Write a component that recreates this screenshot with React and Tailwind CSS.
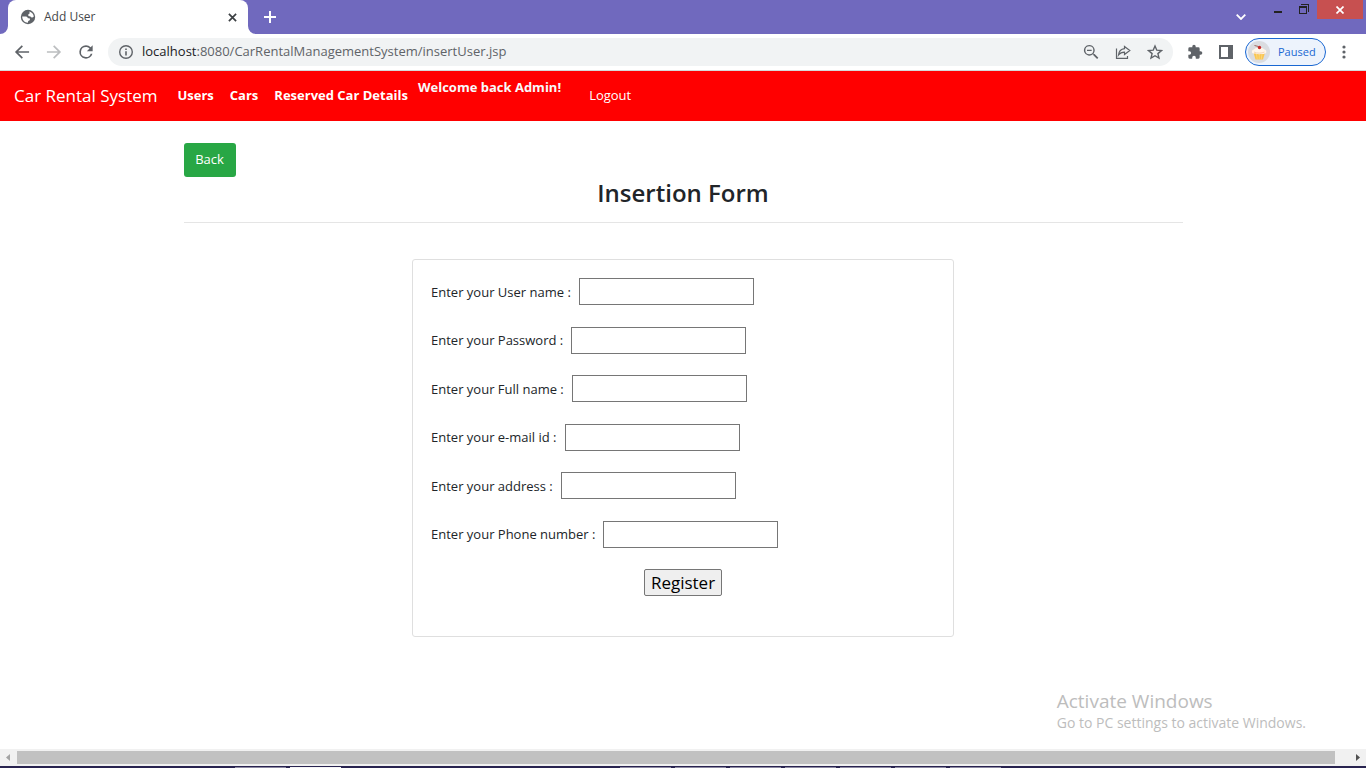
import React from "react";

const fields = [
  { id: "username", label: "Enter your User name :", type: "text" },
  { id: "password", label: "Enter your Password :", type: "password" },
  { id: "fullname", label: "Enter your Full name :", type: "text" },
  { id: "email", label: "Enter your e-mail id :", type: "email" },
  { id: "address", label: "Enter your address :", type: "text" },
  { id: "phone", label: "Enter your Phone number :", type: "tel" },
];

const taskbarWindows = [1, 2, 3, 4, 5, 6, 7];

function Icon({ size = "size-5", color = "fill-[#5f6368]", children, box = "0 0 24 24" }) {
  return (
    <svg viewBox={box} className={`${size} ${color} shrink-0`} aria-hidden="true">
      {children}
    </svg>
  );
}

function TabStrip() {
  return (
    <div className="flex h-[34px] shrink-0 items-start bg-[#7069be]">
      <svg viewBox="0 0 8 8" className="size-2 shrink-0 self-end fill-white" aria-hidden="true">
        <path d="M8 0v8H0a8 8 0 0 0 8-8Z" />
      </svg>
      <div className="flex h-full w-60 items-center rounded-t-lg bg-white pr-2 pl-3">
        <svg viewBox="0 0 16 16" className="size-4 shrink-0" aria-hidden="true">
          <circle cx="8" cy="8" r="7.200" fill="#5f6368" />
          <path
            d="M9.300 2.600c2.400.5 4.200 2.500 4.500 5-.7.9-1.700 1.100-2.600.7-.5-.8-1.300-1-2.300-1-.8-.5-.9-1.500-.2-2.200.8-.2 1.300-.6.6-2.500z"
            fill="#fff"
          />
          <path
            d="M2.200 7.600h3c1.500 0 2.500.6 2.700 1.700h1.500c.8.500.8 1.700-.1 2.200-.9.200-1.300.7-1.400 2.300-3.200 0-5.700-2.700-5.700-6.200z"
            fill="#fff"
          />
        </svg>
        <span className="ml-2 flex-1 text-xs text-[#45474a]">Add User</span>
        <button type="button" aria-label="Close tab" className="flex size-4 items-center justify-center">
          <svg viewBox="0 0 10 10" className="size-[9px] stroke-[#3c4043]" strokeWidth="1.900" aria-hidden="true">
            <path d="M1 1l8 8M9 1L1 9" />
          </svg>
        </button>
      </div>
      <svg viewBox="0 0 8 8" className="size-2 shrink-0 self-end fill-white" aria-hidden="true">
        <path d="M0 0v8h8a8 8 0 0 1-8-8Z" />
      </svg>
      <button type="button" aria-label="New tab" className="flex h-full w-7 items-center justify-center">
        <svg viewBox="0 0 12 12" className="size-3 stroke-white" strokeWidth="2" aria-hidden="true">
          <path d="M6 0v12M0 6h12" />
        </svg>
      </button>
      <div className="flex-1" />
      <button type="button" aria-label="Search tabs" className="flex h-full w-8 items-center justify-center">
        <svg viewBox="0 0 10 6" className="h-[6px] w-[10px] fill-none stroke-white" strokeWidth="1.800" aria-hidden="true">
          <path d="M.7.7L5 5 9.300.7" />
        </svg>
      </button>
      <button type="button" aria-label="Minimize" className="ml-2 flex h-[18px] w-[26px] items-center justify-center">
        <svg viewBox="0 0 8 16" className="h-4 w-2 fill-[#222]" aria-hidden="true">
          <path d="M0 10h8v2H0z" />
        </svg>
      </button>
      <button type="button" aria-label="Restore" className="flex h-[18px] w-[26px] items-center justify-center">
        <svg viewBox="0 0 10 10" className="size-[10px] fill-[#222]" aria-hidden="true">
          <path fillRule="evenodd" d="M2 0h8v8H9V1H2zM0 2h8v8H0zM1 4v5h6V4z" />
        </svg>
      </button>
      <button
        type="button"
        aria-label="Close window"
        className="mr-[3px] flex h-[19px] w-[46px] items-center justify-center bg-[#c75050]"
      >
        <svg viewBox="0 0 8 8" className="size-2 stroke-white" strokeWidth="1.700" aria-hidden="true">
          <path d="M.5.500l7 7M7.500.500l-7 7" />
        </svg>
      </button>
    </div>
  );
}

function Toolbar() {
  return (
    <div className="flex h-[37px] shrink-0 items-center border-b border-[#d5dad8] bg-white pr-3.5 pl-3">
      <button type="button" aria-label="Go back">
        <Icon>
          <path d="M20.500 11H7.400l5.700-5.700L11.700 3.900 3.500 12l8.200 8.100 1.400-1.400L7.400 13h13.100z" />
        </Icon>
      </button>
      <button type="button" aria-label="Go forward" className="ml-3">
        <Icon color="fill-[#bcbec0]">
          <path d="M3.500 11h13.100l-5.700-5.700 1.400-1.400 8.200 8.100-8.200 8.100-1.400-1.400 5.700-5.700H3.500z" />
        </Icon>
      </button>
      <button type="button" aria-label="Reload" className="ml-3">
        <Icon>
          <path d="M17.650 6.350A7.960 7.960 0 0 0 12 4a8 8 0 1 0 7.730 10h-2.080A6 6 0 1 1 12 6c1.660 0 3.140.69 4.220 1.780L13 11h7V4z" />
        </Icon>
      </button>
      <div className="ml-3 flex h-7 flex-1 items-center rounded-full bg-[#f1f3f4] pr-2.5 pl-2.5">
        <svg viewBox="0 0 16 16" className="size-4 shrink-0" aria-hidden="true">
          <circle cx="8" cy="8" r="6.300" fill="none" stroke="#5f6368" strokeWidth="1.400" />
          <path d="M7.200 7.200h1.600v4.300H7.200zM7.200 4.500h1.600V6H7.200z" fill="#5f6368" />
        </svg>
        <div className="ml-2 flex-1 text-[13px] text-[#5f6368]">
          <span className="text-[#202124]">localhost</span>:8080/CarRentalManagementSystem/insertUser.jsp
        </div>
        <div className="flex items-center gap-4">
          <button type="button" aria-label="Zoom">
            <Icon size="size-4">
              <path
                fillRule="evenodd"
                d="M9.500 1.500a8 8 0 0 1 6.300 12.900l.6.600h1l5.600 5.600-1.900 1.900-5.600-5.600v-1l-.6-.6A8 8 0 1 1 9.500 1.500m0 2a6 6 0 1 0 0 12 6 6 0 0 0 0-12M6 8.500h7v2H6z"
              />
            </Icon>
          </button>
          <button type="button" aria-label="Share">
            <svg viewBox="0 0 16 16" className="size-4 fill-none stroke-[#5f6368]" strokeWidth="1.200" aria-hidden="true">
              <path d="M1.500 4.500v9.800h11V12M9.500 2.500l5.300 4-5.300 4V8.200c-2.700 0-4.600.9-6 2.800.4-3.500 2.300-5.800 6-6.300z" />
            </svg>
          </button>
          <button type="button" aria-label="Bookmark this page">
            <svg viewBox="0 0 16 16" className="size-4 fill-none stroke-[#5f6368]" strokeWidth="1.400" aria-hidden="true">
              <path d="M8 2l1.800 4.200 4.600.4-3.500 3 1.100 4.500L8 11.700l-4 2.400 1.100-4.500-3.500-3 4.600-.4z" />
            </svg>
          </button>
        </div>
      </div>
      <button type="button" aria-label="Extensions" className="ml-3.5">
        <Icon size="size-4">
          <path d="M20.500 11H19V7a2 2 0 0 0-2-2h-4V3.500a2.500 2.500 0 0 0-5 0V5H4a2 2 0 0 0-2 2v3.800h1.500a2.700 2.700 0 0 1 0 5.400H2V20a2 2 0 0 0 2 2h3.800v-1.500a2.700 2.700 0 0 1 5.400 0V22H17a2 2 0 0 0 2-2v-4h1.500a2.500 2.500 0 0 0 0-5" />
        </Icon>
      </button>
      <button type="button" aria-label="Side panel" className="ml-4">
        <svg viewBox="0 0 14 14" className="size-3.5 fill-[#5f6368]" aria-hidden="true">
          <path fillRule="evenodd" d="M0 0h14v14H0zM2 2v10h7V2z" />
        </svg>
      </button>
      <button
        type="button"
        className="ml-3 flex h-7 w-[81px] items-center gap-2 rounded-full border border-[#1967d2] bg-[#edf3fc] pl-0.5 text-[11px] text-[#1967d2]"
      >
        <svg viewBox="0 0 22 22" className="size-[22px] shrink-0" aria-hidden="true">
          <circle cx="11" cy="11" r="11" fill="#dadce0" />
          <path d="M5.500 11.500h11.500L15 18.500H7.500z" fill="#fbc550" />
          <path d="M8.500 13l.7 5M11.200 13v5M14 13l-.7 5" stroke="#f7e39a" strokeWidth=".6" />
          <path d="M4.200 12c-.9-2 .3-3.300 1.800-3.500C7 6 14.500 5.500 16 8.300c2 .2 2.800 2 2.100 3.700-2 1.600-11.900 1.600-13.900 0z" fill="#fff6ea" />
          <path d="M6 11c2 1.500 8 1.500 10.500 0" stroke="#f1c9a5" strokeWidth=".8" fill="none" />
          <path d="M6.500 4.500l4 1" stroke="#8d4b3f" strokeWidth=".8" />
          <circle cx="11.500" cy="6.500" r="1.700" fill="#c62828" />
        </svg>
        Paused
      </button>
      <button type="button" aria-label="Menu" className="ml-2.5">
        <svg viewBox="0 0 16 16" className="size-4 fill-[#5f6368]" aria-hidden="true">
          <circle cx="8" cy="3" r="1.600" />
          <circle cx="8" cy="8" r="1.600" />
          <circle cx="8" cy="13" r="1.600" />
        </svg>
      </button>
    </div>
  );
}

function NavBar() {
  return (
    <nav className="flex h-[50px] shrink-0 items-center bg-[#ff0000] px-3.5 text-[13px] text-white">
      <a href="#home" className="text-[17px]">Car Rental System</a>
      <div className="ml-5 flex items-center gap-4 font-bold">
        <a href="#users">Users</a>
        <a href="#cars">Cars</a>
        <a href="#reserved">Reserved Car Details</a>
      </div>
      <p className="ml-2.5 self-start pt-[7px] font-bold text-[#f8f9fa]">Welcome back Admin!</p>
      <a href="#logout" className="ml-7">Logout</a>
    </nav>
  );
}

function TaskbarEdge() {
  return (
    <div className="flex h-0.5 shrink-0 items-end bg-[#28234f]" aria-hidden="true">
      <div className="ml-[235px] h-px w-[51px] bg-[#8d8aa3]" />
      <div className="ml-1 h-px w-[51px] bg-[#f4f4f6]" />
      <div className="ml-[279px] flex gap-1">
        {taskbarWindows.map((n) => (
          <div key={n} className="h-px w-[51px] bg-[#8d8aa3]" />
        ))}
      </div>
    </div>
  );
}

export default function App() {
  return (
    <div className="flex min-h-screen flex-col bg-white font-['Open_Sans','Noto_Sans',sans-serif] text-[#212529]">
      <TabStrip />
      <Toolbar />
      <NavBar />
      <main className="relative flex-1 pt-[22px]">
        <div className="mx-auto max-w-[999px]">
          <a
            href="#back"
            className="inline-flex h-[34px] w-[52px] items-center justify-center rounded-[3px] bg-[#28a745] text-[13px] text-white"
          >
            Back
          </a>
          <h1 className="border-b border-black/10 pb-[13px] text-center text-2xl leading-8 font-semibold">
            Insertion Form
          </h1>
        </div>
        <form
          className="mx-auto mt-9 flex min-h-[378px] max-w-[542px] flex-col justify-between rounded-[3px] border border-[#dfdfdf] px-[18px] pt-[18px] pb-10 text-[13px]"
          onSubmit={(e) => e.preventDefault()}
        >
          {fields.map((f) => (
            <div key={f.id} className="flex h-[27px] items-center gap-2">
              <label htmlFor={f.id} className="pt-0.5">{f.label}</label>
              <input id={f.id} type={f.type} className="h-full w-[175px] border border-[#767676] bg-white px-1" />
            </div>
          ))}
          <button
            type="submit"
            className="h-[27px] w-[78px] self-center rounded-xs border border-[#767676] bg-[#efefef] text-[17px] leading-6 text-black"
          >
            Register
          </button>
        </form>
        <aside className="pointer-events-none absolute right-15 bottom-4 text-[#bdbdbd]">
          <p className="text-[19px] leading-6">Activate Windows</p>
          <p className="text-sm">Go to PC settings to activate Windows.</p>
        </aside>
      </main>
      <div className="flex h-[17px] shrink-0 items-center bg-[#f1f1f1]">
        <svg viewBox="0 0 17 17" className="size-[17px] fill-[#a3a3a3]" aria-hidden="true">
          <path d="M6 8.500L10 5v7z" />
        </svg>
        <div className="h-[13px] flex-1 bg-[#c1c1c1]" />
        <svg viewBox="0 0 31 17" className="h-[17px] w-[31px] fill-[#505050]" aria-hidden="true">
          <path d="M25 8.500L21 5v7z" />
        </svg>
      </div>
      <TaskbarEdge />
    </div>
  );
}
